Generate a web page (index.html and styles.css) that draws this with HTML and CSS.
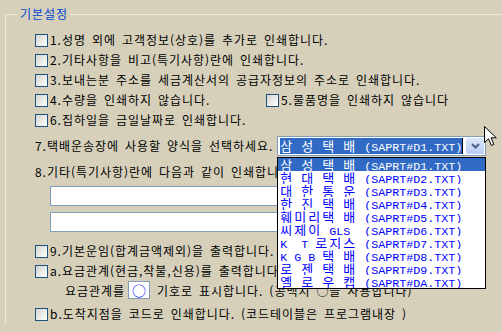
FILE: index.html
```html
<!DOCTYPE html>
<html lang="ko">
<head>
    <meta charset="UTF-8">
    <title>기본설정</title>
    <link rel="stylesheet" href="styles.css">
</head>
<body>

<fieldset class="group">
    <legend class="group-title">기본설정</legend>

    <label class="row"><input type="checkbox" class="check"><span>1.성명 외에 고객정보(상호)를 추가로 인쇄합니다.</span></label>
    <label class="row"><input type="checkbox" class="check"><span>2.기타사항을 비고(특기사항)란에 인쇄합니다.</span></label>
    <label class="row"><input type="checkbox" class="check"><span>3.보내는분 주소를 세금계산서의 공급자정보의 주소로 인쇄합니다.</span></label>
    <div class="row">
        <label class="half"><input type="checkbox" class="check"><span>4.수량을 인쇄하지 않습니다.</span></label>
        <label class="half"><input type="checkbox" class="check"><span>5.물품명을 인쇄하지 않습니다</span></label>
    </div>
    <label class="row"><input type="checkbox" class="check"><span>6.집하일을 금일날짜로 인쇄합니다.</span></label>

    <div class="row row-gap">
        <span>7.택배운송장에 사용할 양식을 선택하세요.</span>
        <div class="combo">
            <div class="combo-value"><span class="combo-sel"><b>삼</b> <b>성</b> <b>택</b> <b>배</b> (SAPRT#D1.TXT)</span></div>
            <div class="combo-btn">
                <svg width="9" height="6" viewBox="0 0 9 6"><path d="M1 1 L4.5 4.5 L8 1" fill="none" stroke="#4d6185" stroke-width="2"/></svg>
            </div>
            <!-- 펼쳐진 목록 -->
            <ul class="combo-list">
                <li class="active"><b>삼</b> <b>성</b> <b>택</b> <b>배</b> (SAPRT#D1.TXT)</li>
                <li><b>현</b> <b>대</b> <b>택</b> <b>배</b> (SAPRT#D2.TXT)</li>
                <li><b>대</b> <b>한</b> <b>통</b> <b>운</b> (SAPRT#D3.TXT)</li>
                <li><b>한</b> <b>진</b> <b>택</b> <b>배</b> (SAPRT#D4.TXT)</li>
                <li><b>훼미리택</b> <b>배</b> (SAPRT#D5.TXT)</li>
                <li><b>씨제이</b> GLS  (SAPRT#D6.TXT)</li>
                <li>K  T <b>로지스</b> (SAPRT#D7.TXT)</li>
                <li>K G B <b>택</b> <b>배</b> (SAPRT#D8.TXT)</li>
                <li><b>로</b> <b>젠</b> <b>택</b> <b>배</b> (SAPRT#D9.TXT)</li>
                <li><b>옐</b> <b>로</b> <b>우</b> <b>캡</b> (SAPRT#DA.TXT)</li>
            </ul>
        </div>
    </div>

    <div class="row row-gap"><span>8.기타(특기사항)란에 다음과 같이 인쇄합니다.</span></div>
    <input type="text" class="memo memo-first">
    <input type="text" class="memo">

    <label class="row row-9"><input type="checkbox" class="check"><span>9.기본운임(합계금액제외)을 출력합니다.</span></label>
    <label class="row"><input type="checkbox" class="check"><span>a.요금관계(현금,착불,신용)를 출력합니다.</span></label>
    <div class="sub-row">
        <span>요금관계를</span>
        <span class="mark-box">○</span>
        <span>기호로 표시합니다. (공백시 ○을 사용합니다)</span>
    </div>
    <label class="row row-b"><input type="checkbox" class="check"><span>b.도착지점을 코드로 인쇄합니다. (코드테이블은 프로그램내장 )</span></label>
</fieldset>

<svg class="pointer" width="14" height="22" viewBox="0 0 14 22">
    <path d="M0.5 0.5 L0.5 16.5 L4.5 12.8 L7.3 19.5 L9.8 18.4 L7.1 11.8 L12.3 11.8 Z" fill="#fff" stroke="#000" stroke-width="1"/>
</svg>

</body>
</html>
```

FILE: styles.css
```css
/* 기본 */
body {
    margin: 0;
    background-color: #d6d0bb;
    font-family: "Noto Sans CJK KR", sans-serif;
    font-size: 12px;
    letter-spacing: 0.96px;
    word-spacing: 1.7px;
    color: #000;
    height: 332px;
    overflow: hidden;
}

/* 그룹 박스 */
.group {
    margin: 7px 0 0 5px;
    padding: 9px 0 0 29px;
    border: none;
    border-top: 1px solid #ece8dc;
    border-left: 1px solid #ece8dc;
    min-width: 0;
}

.group-title {
    margin-left: -17px;
    padding: 0 2px;
    line-height: 14px;
    color: #0046d5;
}

/* 행 */
.row {
    display: flex;
    align-items: center;
    height: 20px;
    line-height: 20px;
    white-space: nowrap;
}

.row-gap {
    margin-top: 6px;
}

.row-9 {
    margin-top: 9px;
}

.row-b {
    margin-top: 5px;
}

.half {
    display: flex;
    align-items: center;
    width: 231px;
}

.check {
    appearance: none;
    -webkit-appearance: none;
    width: 13px;
    height: 13px;
    margin: 0 2px 0 0;
    border: 1px solid #1c5180;
    background: linear-gradient(to bottom right, #d4d4ce, #fff);
    flex-shrink: 0;
}

/* 콤보박스 */
.combo {
    position: relative;
    display: flex;
    width: 209px;
    height: 20px;
    margin-left: 4px;
    box-sizing: border-box;
    border: 1px solid #7f9db9;
    background-color: #fff;
    letter-spacing: 0;
    word-spacing: 0;
}

.combo-value {
    flex: 1;
    padding: 1px 0 0 2px;
    overflow: hidden;
}

.combo-sel {
    display: block;
    height: 16px;
    width: 182px;
    background-color: #316ac5;
    border-right: 1px solid #000;
    color: #fff;
    font-family: "Liberation Mono", monospace;
    font-size: 11.67px;
    line-height: 16px;
    white-space: pre;
    overflow: hidden;
}

.combo-sel b,
.combo-list b {
    font-weight: normal;
    font-family: "Noto Sans CJK KR", sans-serif;
    font-size: 13px;
    letter-spacing: 2.04px;
}

.combo-btn {
    width: 18px;
    height: 16px;
    margin: 1px 1px 0 0;
    display: flex;
    align-items: center;
    justify-content: center;
    background: linear-gradient(#dde7fb, #b9cdf5);
    border-radius: 2px;
}

.combo-list {
    position: absolute;
    left: -1px;
    top: 20px;
    width: 209px;
    margin: 0;
    padding: 0;
    list-style: none;
    box-sizing: border-box;
    border: 1px solid #000;
    background-color: #fff;
    z-index: 2;
}

.combo-list li {
    height: 13px;
    line-height: 13px;
    padding-left: 2px;
    font-family: "Liberation Mono", monospace;
    font-size: 11.67px;
    color: #0000ff;
    white-space: pre;
    overflow: hidden;
}

.combo-list li.active {
    background-color: #316ac5;
    color: #fff;
}

/* 입력칸 */
.memo {
    display: block;
    width: 420px;
    height: 20px;
    margin: 6px 0 0 15px;
    padding: 0;
    box-sizing: border-box;
    border: 1px solid #7f9db9;
    background-color: #fff;
}

.memo-first {
    margin-top: 4px;
}

.sub-row {
    display: flex;
    align-items: center;
    height: 18px;
    margin-left: 30px;
    white-space: nowrap;
}

.mark-box {
    width: 22px;
    height: 18px;
    box-sizing: border-box;
    margin: 0 7px 0 3px;
    border: 1px solid #7f9db9;
    background-color: #fff;
    color: #0000ff;
    font-size: 14px;
    letter-spacing: 0;
    line-height: 16px;
    text-align: center;
}

.pointer {
    position: absolute;
    left: 484px;
    top: 126px;
    z-index: 3;
}
```
